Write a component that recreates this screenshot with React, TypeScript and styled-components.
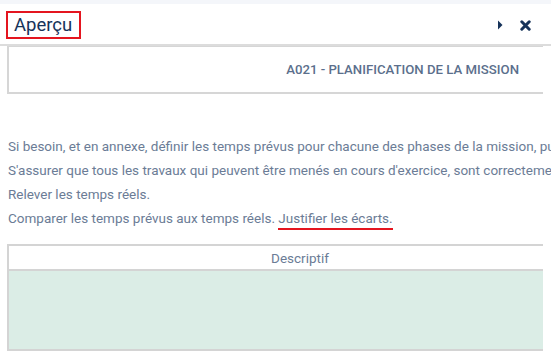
import React from "react";
import styled, { createGlobalStyle } from "styled-components";

const Global = createGlobalStyle`
  html, body { margin: 0; padding: 0; background: #ffffff; }
  body { font-family: Roboto, "Liberation Sans", Arial, sans-serif; width: 551px; height: 360px; overflow: hidden; }
`;

const Page = styled.div`
  width: 551px;
  height: 360px;
  display: flex;
  flex-direction: column;
  border-top: 4px solid #f4f6fa;
  box-sizing: border-box;
  overflow: hidden;
`;

const Header = styled.div`
  height: 40px;
  display: flex;
  align-items: center;
  padding: 0 20px 0 6px;
  border-bottom: 2px solid #dcdcdc;
  flex-shrink: 0;
`;

const Title = styled.div`
  border: 2px solid #e4151f;
  padding: 0 7px 0 6px;
  height: 24px;
  margin-top: 2px;
  display: flex;
  align-items: center;
  font-size: 18.5px;
  color: #16335a;
  line-height: 1;
`;

const Spacer = styled.div`
  flex: 1;
`;

const Actions = styled.div`
  display: flex;
  align-items: center;
  gap: 17px;
  margin-top: 2px;
`;

const IconButton = styled.span<{ $w: number }>`
  display: inline-flex;
  width: ${(p) => p.$w}px;
  height: 11px;
  align-items: center;
  justify-content: center;
`;

const Content = styled.div`
  margin-left: 7px;
  width: 544px;
  overflow: hidden;
  display: flex;
  flex-direction: column;
`;

const Clip = styled.div`
  width: 536px;
  overflow: hidden;
`;

const InfoBox = styled.div`
  width: 560px;
  height: 48px;
  border: 2px solid #d6d6d6;
  border-top-width: 1px;
  box-sizing: border-box;
  display: flex;
  align-items: center;
  justify-content: flex-end;
  padding-right: 46px;
  font-size: 13.2px;
  font-weight: 500;
  color: #5b6f8c;
`;

const Paragraphs = styled.div`
  padding: 40px 0 0 1px;
  display: flex;
  flex-direction: column;
`;

const Line = styled.div`
  font-size: 13.5px;
  line-height: 24px;
  height: 24px;
  color: #6b7c96;
  white-space: nowrap;
`;

const Marked = styled.span`
  border-bottom: 2px solid #e4151f;
  padding-bottom: 2px;
`;

const TableClip = styled(Clip)`
  margin-top: 14px;
`;

const Table = styled.div`
  width: 586px;
  border: 2px solid #d4d4d4;
  box-sizing: border-box;
  display: flex;
  flex-direction: column;
`;

const TableHead = styled.div`
  height: 23px;
  display: flex;
  align-items: center;
  justify-content: center;
  font-size: 13.5px;
  color: #6b7c96;
  border-bottom: 2px solid #d4d4d4;
`;

const TableBody = styled.div`
  height: 78px;
  background: #dbede6;
`;

export default function App() {
  return (
    <>
      <Global />
      <Page>
        <Header>
          <Title>Aperçu</Title>
          <Spacer />
          <Actions>
            <IconButton $w={7}>
              <svg width="6" height="10" viewBox="0 0 6 10">
                <path d="M1 0.5 L5.5 5 L1 9.5 Z" fill="#16335a" />
              </svg>
            </IconButton>
            <IconButton $w={11}>
              <svg width="11" height="11" viewBox="0 0 11 11">
                <path d="M1.8 1.8 L9.2 9.2 M9.2 1.8 L1.8 9.2" stroke="#16335a" strokeWidth="3" strokeLinecap="round" />
              </svg>
            </IconButton>
          </Actions>
        </Header>
        <Content>
          <Clip>
            <InfoBox>A021 - PLANIFICATION DE LA MISSION</InfoBox>
          </Clip>
          <Paragraphs>
            <Line>Si besoin, et en annexe, définir les temps prévus pour chacune des phases de la mission, puis les répartir.</Line>
            <Line>S'assurer que tous les travaux qui peuvent être menés en cours d'exercice, sont correctement planifiés.</Line>
            <Line>Relever les temps réels.</Line>
            <Line>
              Comparer les temps prévus aux temps réels. <Marked>Justifier les écarts.</Marked>
            </Line>
          </Paragraphs>
          <TableClip>
            <Table>
              <TableHead>Descriptif</TableHead>
              <TableBody />
            </Table>
          </TableClip>
        </Content>
      </Page>
    </>
  );
}
